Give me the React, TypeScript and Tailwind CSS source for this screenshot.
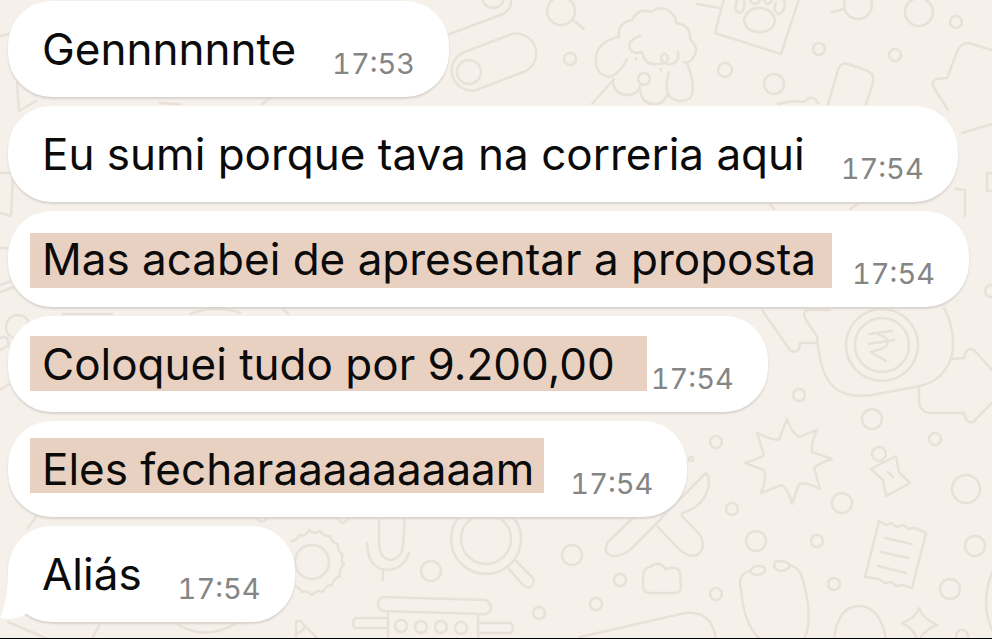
import React from "react";
import clsx from "clsx";

// --- 1. Messages ---
interface Message {
  text: string;
  time: string;
  highlight?: string;
  tail?: boolean;
}

const MESSAGES: Message[] = [
  { text: "Gennnnnnte", time: "17:53" },
  { text: "Eu sumi porque tava na correria aqui", time: "17:54" },
  {
    text: "Mas acabei de apresentar a proposta",
    time: "17:54",
    highlight: "pt-[2px] -mt-[2px] pb-[5px] -mb-[5px] pr-4 -mr-4",
  },
  {
    text: "Coloquei tudo por 9.200,00",
    time: "17:54",
    highlight: "pt-[4px] -mt-[4px] pb-[3px] -mb-[3px] pr-8 -mr-8",
  },
  {
    text: "Eles fecharaaaaaaaaam",
    time: "17:54",
    highlight: "pt-[7px] -mt-[7px] pr-2.5 -mr-2.5",
  },
  { text: "Aliás", time: "17:54", tail: true },
];

// --- 2. Wallpaper ---
// [cx, cy, r]
const DOTS: [number, number, number][] = [
  [469, 72, 12], [493, -3, 11], [561, 11, 14], [570, 59, 6], [858, 5, 14],
  [919, 12, 14], [956, 22, 6], [819, 49, 6], [895, 55, 6], [725, 70, 7],
  [774, 84, 10], [799, 395, 6], [872, 419, 10], [935, 439, 6], [716, 442, 6],
  [732, 509, 6], [756, 541, 10], [817, 541, 6], [842, 503, 10], [834, 584, 6],
  [716, 594, 6], [966, 489, 14], [975, 546, 10], [950, 589, 10], [962, 636, 6],
  [572, 555, 10], [620, 580, 6], [596, 604, 6], [539, 613, 6], [431, 571, 10],
  [991, 291, 6], [882, 345, 36], [882, 345, 27], [486, 539, 35], [486, 539, 25],
  [312, 562, 17], [401, 626, 6], [421, 627, 6], [441, 627, 6], [461, 628, 6],
  [879, 454, 7], [18, 327, 12], [644, 79, 6], [691, 459, 2],
];

const DOODLES = [
  // remote controls
  "M447 35 L503 14 Q512 9 511 0",
  "M462 53 L512 34 A20 20 0 0 1 526 71 L476 90 A20 20 0 0 1 462 53",
  "M573 20 L584 29",
  // poodle
  "M619 37 Q617 23 632 20 Q638 7 651 12 Q661 5 669 11 Q677 16 676 23 Q691 25 690 39 Q700 48 693 58 Q689 64 684 62",
  "M619 37 Q599 41 596 56 Q594 74 609 77 Q620 74 627 59",
  "M640 36 Q627 40 630 49 Q634 55 642 52 Q645 66 657 64 Q668 65 668 57 Q664 50 661 57 Q661 65 672 64 Q680 61 678 52",
  "M613 82 Q615 96 630 95 Q637 94 640 86",
  "M640 90 Q642 104 654 104 Q664 104 667 95",
  "M669 72 Q664 86 669 96 Q679 105 690 98 Q697 88 687 63",
  "M614 79 L592 104",
  "M636 58 v1 M661 69 v1",
  // paw card
  "M697 4 L720 8 M724 -1 L715 33 L781 54 L799 -1",
  "M744 20 Q748 7 759 8 Q772 8 775 20 Q774 32 759 32 Q746 32 744 20",
  "M737 0 Q733 12 740 13 Q746 9 744 0 M750 0 Q754 8 760 0 M764 0 Q768 8 772 0 M776 3 Q772 12 779 14 Q787 10 784 1",
  "M832 12 L844 9",
  "M828 104 L838 70 Q841 62 848 64 L868 71 Q875 75 873 83 L866 104",
  "M778 104 Q790 100 804 102 Q812 93 818 103",
  "M992 50 L968 43 Q960 43 957 52 L947 78 L936 79 Q931 81 934 88 L948 110 M962 133 L992 124",
  "M955 189 L965 190 V216 M992 173 H987 V191 H992",
  // speech bubbles and coin
  "M762 310 L790 350 Q795 354 799 349 L800 343 L817 343",
  "M830 310 H806 Q802 314 806 320 L817 336 Q820 380 838 390 Q850 398 872 395 L920 386 Q945 380 952 355 Q956 330 944 308",
  "M869 334 L892 331 M869 344 L894 340 M878 334 Q894 340 884 348 L871 352 L886 361",
  "M919 387 V403 Q922 413 930 413 H964 Q966 424 973 422 L992 403 M953 359 L964 358 Q966 346 974 350 L992 370",
  // burst
  "M787 419 Q791 432 799 437 L817 430 Q811 442 812 452 L832 459 Q819 463 814 468 L820 489 Q807 482 799 484 L792 504 Q788 489 782 485 L761 493 Q767 479 764 470 L745 463 Q759 459 764 455 L757 433 Q769 439 779 440 Z",
  // candy
  "M871 469 L896 456 L899 472 L910 483 L886 496 L883 480 Z M888 472 L893 477",
  // receipt
  "M879 521 L886 525 L891 523 L897 527 L903 525 L909 529 L915 528 L926 533 L912 588 L903 585 L897 586 L891 582 L885 583 L879 579 L865 577 Z",
  "M885 538 L912 544 M881 552 L908 558 M878 566 L906 573",
  // stethoscope
  "M750 571 Q737 574 741 590 Q744 625 760 639 M750 571 Q754 564 764 567 Q768 573 758 575 Q752 575 750 571",
  "M790 565 Q800 568 803 580 Q814 620 804 639 M790 565 Q784 559 775 562 Q772 569 780 571 Q788 571 790 565",
  "M834 639 Q838 606 859 606 Q880 606 886 639",
  "M919 608 Q922 618 937 625 Q924 630 920 639 M919 608 Q916 618 902 623 Q913 628 917 639",
  "M992 573 Q980 602 992 630",
  "M685 613 Q712 610 716 639",
  // scissors
  "M662 517 L706 473 Q712 480 706 494 Q700 508 682 513 L682 516 L700 535 Q707 548 697 555 Q690 558 680 550 L655 524",
  "M634 517 L608 542 Q602 553 612 556 Q620 557 630 550 L662 518",
  // magnifier handle
  "M508 568 L524 586 Q530 590 533 584 Q535 580 532 577 L515 560",
  // folder
  "M643 578 Q643 567 650 567 Q655 562 662 565 L666 569 Q680 565 680 575 L681 586 Q681 592 675 593 L650 593 Q644 593 643 587 Z",
  "M580 637 L685 613",
  // roller
  "M382 597 L486 600 Q493 604 490 611 Q487 615 482 614 L382 611 Q374 605 382 597",
  "M388 612 V639 M478 615 V639 M388 618 H355 Q351 623 355 628 H388 M478 623 H511 Q515 628 511 633 H478",
  // mic
  "M379 515 V545 Q380 559 391 560 Q402 558 403 545 L405 515 M367 543 Q368 568 386 570 Q403 570 409 553 M383 570 V580",
  "M296 637 V622 Q300 618 304 625 Q305 631 298 633 M304 625 L318 639",
  // gear
  "M291 541 Q297 541 299 535 Q305 537 309 530 Q314 535 320 531 Q324 537 330 536 Q332 543 338 544 Q337 551 343 555 Q340 560 344 565 Q338 569 340 576 Q334 578 332 585 Q326 585 323 592 Q317 589 312 595 Q308 590 302 592 Q299 586 292 586",
  // edges and gaps between bubbles
  "M0 36 L10 34 M0 173 H13 L11 216 L0 213 M17 82 L19 111 L36 101 M0 248 H9 M0 285 L12 281 M0 292 L14 287",
  "M0 338 Q10 334 8 346 L0 350 M0 390 L9 384 M160 103 L180 104 M262 104 L270 98",
  "M63 314 H112 M190 314 Q215 304 240 313 M283 309 L288 314 M770 204 L774 209 M850 209 L858 204",
  "M172 621 Q205 644 240 621 M8 622 L48 639 M100 624 L92 639 M28 528 L38 514 M255 517 Q262 526 268 517 M338 519 Q344 527 348 518",
];

const Wallpaper = () => (
  <svg
    className="absolute inset-0 h-full w-full"
    viewBox="0 0 992 639"
    preserveAspectRatio="xMinYMin slice"
    fill="none"
    stroke="#e9e0da"
    strokeWidth="2.5"
    strokeLinecap="round"
    strokeLinejoin="round"
    aria-hidden="true"
  >
    {DOODLES.map((d, i) => (
      <path key={i} d={d} />
    ))}
    {DOTS.map(([cx, cy, r], i) => (
      <circle key={i} cx={cx} cy={cy} r={r} />
    ))}
  </svg>
);

// --- 3. Bubble ---
const Tail = () => (
  <svg
    className="absolute bottom-0 -left-2 h-14 w-9"
    viewBox="0 0 36 56"
    fill="#ffffff"
    aria-hidden="true"
  >
    <path d="M8 0 C8 24 6 38 0 52 C8 54 17 53 24 49 L36 40 L30 0 Z" />
  </svg>
);

const Bubble: React.FC<{ message: Message }> = ({ message }) => {
  const { text, time, highlight, tail } = message;

  return (
    <li className="relative flex w-fit gap-9 rounded-[44px] bg-white py-6 pr-[34px] pl-[34px] shadow-[0_2px_2px_#d9d3ce]">
      {tail && <Tail />}
      <p className="relative text-[44px] leading-[48px] whitespace-nowrap text-[#0b0b0b]">
        {highlight ? (
          <mark
            className={clsx(
              "-ml-3 block bg-[#e9d1c1] pl-3 text-[#0b0b0b]",
              highlight,
            )}
          >
            {text}
          </mark>
        ) : (
          text
        )}
      </p>
      <time className="relative h-12 min-w-[82px] pt-[25px] text-center text-[29px] leading-7 text-[#858585] tabular-nums">
        {time}
      </time>
    </li>
  );
};

// --- 4. Chat ---
export default function App() {
  return (
    <main className="relative min-h-screen overflow-hidden border-b border-black bg-[#f5f0ea] font-['Inter',sans-serif]">
      <Wallpaper />
      <ul className="relative flex flex-col gap-[9px] pt-px pl-2">
        {MESSAGES.map((message, i) => (
          <Bubble key={i} message={message} />
        ))}
      </ul>
    </main>
  );
}
